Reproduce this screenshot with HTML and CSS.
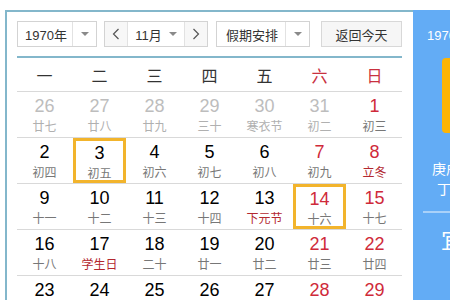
FILE: index.html
```html
<!DOCTYPE html>
<html>
	<head>
		<meta charset="utf-8">
		<title>万年历</title>
		<link rel="stylesheet" href="styles.css">
	</head>
	<body>
		<div class="wrap">
			<div class="main">
				<div class="bar">
					<div class="sel year"><span class="val">1970年</span><span class="arr"><i></i></span></div>
					<div class="sel month">
						<span class="step"><svg width="8" height="12" viewBox="0 0 8 12"><polyline points="6.5,1 1.5,6 6.5,11" fill="none" stroke="#555" stroke-width="1.2"/></svg></span>
						<span class="val">11月<i class="tri"></i></span>
						<span class="step next"><svg width="8" height="12" viewBox="0 0 8 12"><polyline points="1.5,1 6.5,6 1.5,11" fill="none" stroke="#555" stroke-width="1.2"/></svg></span>
					</div>
					<div class="sel holiday"><span class="val">假期安排</span><span class="arr"><i></i></span></div>
					<div class="today">返回今天</div>
				</div>

				<div class="cal">
					<div class="week">
						<span>一</span><span>二</span><span>三</span><span>四</span><span>五</span><span class="red">六</span><span class="red">日</span>
					</div>
					<div class="row">
						<div class="day other"><b>26</b><em>廿七</em></div>
						<div class="day other"><b>27</b><em>廿八</em></div>
						<div class="day other"><b>28</b><em>廿九</em></div>
						<div class="day other"><b>29</b><em>三十</em></div>
						<div class="day other"><b>30</b><em>寒衣节</em></div>
						<div class="day other"><b>31</b><em>初二</em></div>
						<div class="day rest"><b>1</b><em>初三</em></div>
					</div>
					<div class="row">
						<div class="day"><b>2</b><em>初四</em></div>
						<div class="day on"><b>3</b><em>初五</em></div>
						<div class="day"><b>4</b><em>初六</em></div>
						<div class="day"><b>5</b><em>初七</em></div>
						<div class="day"><b>6</b><em>初八</em></div>
						<div class="day rest"><b>7</b><em>初九</em></div>
						<div class="day rest"><b>8</b><em class="fest">立冬</em></div>
					</div>
					<div class="row">
						<div class="day"><b>9</b><em>十一</em></div>
						<div class="day"><b>10</b><em>十二</em></div>
						<div class="day"><b>11</b><em>十三</em></div>
						<div class="day"><b>12</b><em>十四</em></div>
						<div class="day"><b>13</b><em class="fest">下元节</em></div>
						<div class="day rest on"><b>14</b><em>十六</em></div>
						<div class="day rest"><b>15</b><em>十七</em></div>
					</div>
					<div class="row">
						<div class="day"><b>16</b><em>十八</em></div>
						<div class="day"><b>17</b><em class="fest">学生日</em></div>
						<div class="day"><b>18</b><em>二十</em></div>
						<div class="day"><b>19</b><em>廿一</em></div>
						<div class="day"><b>20</b><em>廿二</em></div>
						<div class="day rest"><b>21</b><em>廿三</em></div>
						<div class="day rest"><b>22</b><em>廿四</em></div>
					</div>
					<div class="row">
						<div class="day"><b>23</b><em>廿五</em></div>
						<div class="day"><b>24</b><em>廿六</em></div>
						<div class="day"><b>25</b><em>廿七</em></div>
						<div class="day"><b>26</b><em>廿八</em></div>
						<div class="day"><b>27</b><em>廿九</em></div>
						<div class="day rest"><b>28</b><em>十月</em></div>
						<div class="day rest"><b>29</b><em>初二</em></div>
					</div>
				</div>
			</div>

			<div class="side">
				<p class="date">1970-11-03 星期二</p>
				<div class="big">3</div>
				<p class="gz1">庚戌年 丙戌月</p>
				<p class="gz2">丁卯日</p>
				<hr>
				<p class="yi">宜</p>
			</div>
		</div>
	</body>
</html>
```

FILE: styles.css
```css
body { margin: 0; background: #fff; overflow: hidden;
	font-family: "Liberation Sans", "Noto Sans CJK SC", sans-serif;
}

.wrap { display: flex; margin: 10px 0 0 5px; width: 600px; }

.main { width: 385px; padding: 9px 11px 0 10px;
	border-top: 2px solid #83b7cb; border-left: 2px solid #83b7cb;
}

/* toolbar */
.bar { display: flex; height: 26px; font-size: 13px; color: #333; }

.sel { display: flex; box-sizing: border-box; height: 26px;
	border: 1px solid #d3d3d3; background: #fff;
}
.sel .val { flex: 1; display: flex; align-items: center; justify-content: center; }
.sel .arr { width: 23px; border-left: 1px solid #e2e2e2;
	display: flex; align-items: center; justify-content: center;
}
.sel .arr i, .tri { display: inline-block; width: 0; height: 0;
	border-left: 4px solid transparent; border-right: 4px solid transparent;
	border-top: 4px solid #8a8a8a;
}
.tri { margin-left: 7px; }

.year { width: 80px; }
.year .val { padding-left: 2px; }
.month { width: 104px; margin-left: 7px; }
.month .step { width: 22px; background: #f7f7f7; border-right: 1px solid #e2e2e2;
	display: flex; align-items: center; justify-content: center;
}
.month .next { border-right: 0; border-left: 1px solid #e2e2e2; }
.holiday { width: 94px; margin-left: 8px; }
.holiday .val { padding-left: 2px; }

.today { width: 81px; margin-left: 11px; box-sizing: border-box;
	border: 1px solid #d8d8d8; background: #f6f6f6;
	display: flex; align-items: center; justify-content: center;
}

/* calendar grid */
.cal { margin-top: 9px; width: 385px; border-top: 2px solid #83b7cb; }

.week { display: grid; grid-template-columns: repeat(7, 55px); height: 33px;
	border-bottom: 1px solid #d9d9d9; font-size: 16px; color: #333;
	align-items: center; text-align: center;
	font-family: "Noto Sans CJK SC", sans-serif;
}
.week .red { color: #c9313f; }

.row { display: grid; grid-template-columns: repeat(7, 55px); height: 46px;
	box-sizing: border-box; border-bottom: 1px solid #d9d9d9;
}

.day { margin: 0 1px; box-sizing: border-box; padding-top: 4px;
	border: 2px solid transparent; border-top: 0;
	text-align: center; color: #000;
}
.day b { display: block; font-weight: normal; font-size: 18px; line-height: 20px; }
.day em { display: block; font-style: normal; font-size: 12px; line-height: 16px;
	margin-top: 2px; color: #777; font-family: "Noto Sans CJK SC", sans-serif;
}
.day.rest b { color: #cf2a3a; }
.day.other b { color: #bdbdbd; }
.day.other em { color: #b0b0b0; }
.day em.fest { color: #b3282f; }

.day.on { border: 3px solid #f2b42c; padding-top: 1px; height: 45px; margin-top: 0; }
.day.on b { margin-top: 1px; }

/* right panel */
.side { width: 160px; height: 300px; background: #63acf5; color: #fff;
	font-family: "Noto Sans CJK SC", sans-serif;
}
.side p { margin: 0; }
.side .date { margin: 17px 0 0 14px; font-size: 13px; line-height: 18px;
	font-family: "Liberation Sans", "Noto Sans CJK SC", sans-serif;
}
.side .big { width: 90px; height: 75px; margin: 13px 0 0 29px; border-radius: 4px;
	background: #fcb405; font-size: 52px; line-height: 75px; text-align: center;
}
.side .gz1 { margin: 25px 0 0 19px; font-size: 14px; line-height: 20px; }
.side .gz2 { margin: 0 0 0 24px; font-size: 14px; line-height: 20px; }
.side hr { margin: 13px 0 0 10px; width: 130px; border: 0; height: 2px;
	background: rgba(255, 255, 255, 0.45);
}
.side .yi { margin: 10px 0 0 28px; font-size: 22px; line-height: 30px; }
```
